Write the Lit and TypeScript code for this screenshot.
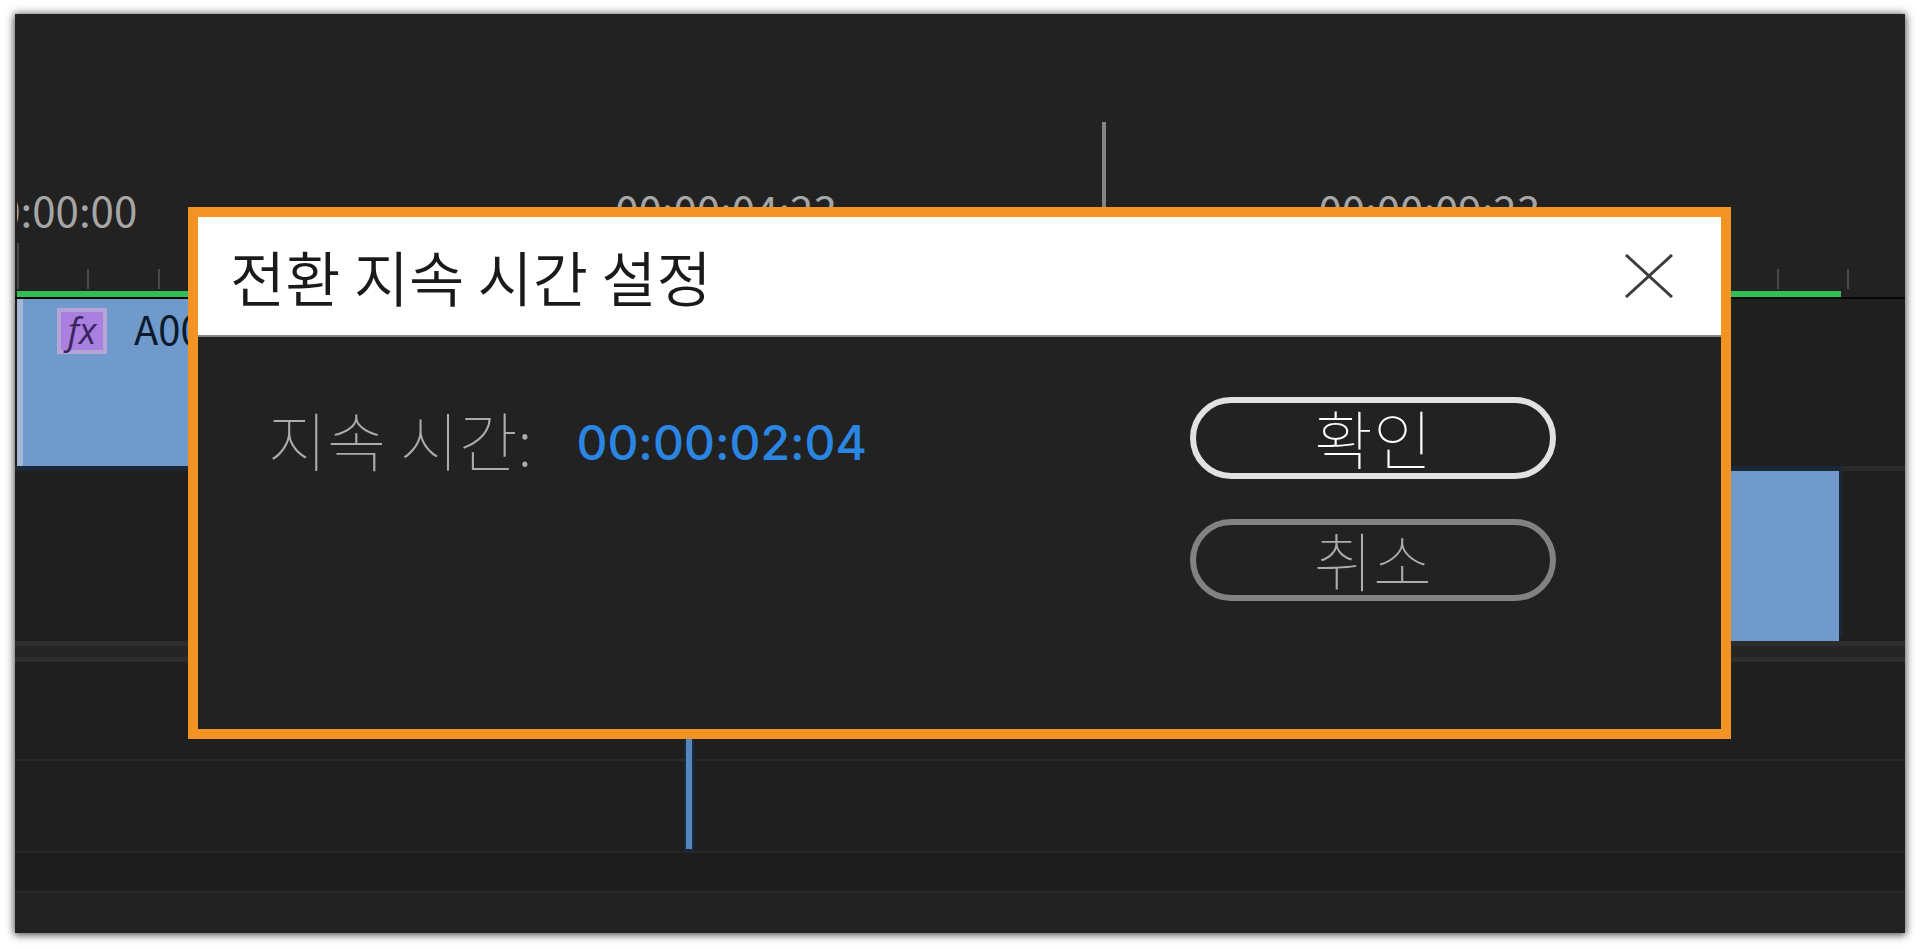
import { LitElement, html, css } from "lit";
import { customElement, state } from "lit/decorators.js";

interface RulerMark {
  at: number;
  major?: boolean;
}

const STEP = 3.728;
const MARKS: RulerMark[] = Array.from({ length: 27 }, (_, i) => ({
  at: i * STEP,
  major: i % 10 === 0,
}));

const LABELS = [
  { at: 0.5, text: "00:00:00:00" },
  { at: 37.55, text: "00:00:04:23" },
  { at: 74.8, text: "00:00:09:23" },
];

@customElement("transition-dialog")
export class TransitionDialog extends LitElement {
  @state() private duration = "00:00:02:04";

  static styles = css`
    :host {
      display: block;
      border: 10px solid #f39324;
      background: #222;
      font-family: "Noto Sans CJK KR", sans-serif;
    }
    .title-bar {
      display: flex;
      align-items: center;
      justify-content: space-between;
      height: 118px;
      padding: 0 48px 0 32px;
      background: #fff;
      border-bottom: 2px solid #858585;
    }
    .title {
      margin: 0;
      font-size: 60px;
      line-height: 80px;
      font-weight: 350;
      color: #1a1a1a;
    }
    button {
      font-family: inherit;
      padding: 0;
      background: none;
      cursor: pointer;
    }
    .close {
      display: block;
      border: 0;
    }
    .close svg {
      display: block;
      width: 48px;
      height: 44px;
    }
    .body {
      display: flex;
      justify-content: space-between;
      align-items: flex-start;
      padding: 60px 165px 128px 70px;
    }
    .field {
      display: flex;
      align-items: center;
      height: 82px;
      gap: 44px;
    }
    .field label {
      font-size: 64px;
      line-height: 82px;
      font-weight: 100;
      color: #acacac;
      white-space: nowrap;
    }
    .field input {
      width: 320px;
      padding: 10px 0 0;
      border: 0;
      outline: 0;
      background: none;
      font-family: Inter, sans-serif;
      font-size: 48px;
      font-weight: 500;
      font-feature-settings: "calt" 0;
      line-height: 64px;
      color: #2a86e2;
    }
    .actions {
      display: flex;
      flex-direction: column;
      gap: 40px;
      width: 366px;
    }
    .actions button {
      height: 82px;
      border: 6px solid #828282;
      border-radius: 41px;
      padding-bottom: 4px;
      color: #acacac;
      font-size: 64px;
      line-height: 66px;
      font-weight: 100;
    }
    .actions .primary {
      border-color: #e2e2e2;
      color: #fff;
    }
  `;

  render() {
    return html`
      <header class="title-bar">
        <h1 class="title">전환 지속 시간 설정</h1>
        <button class="close" type="button" aria-label="닫기">
          <svg viewBox="0 0 48 44" fill="none" stroke="#3c3c3c" stroke-width="3">
            <path d="M1 1 47 43M47 1 1 43" />
          </svg>
        </button>
      </header>
      <div class="body">
        <div class="field">
          <label for="duration">지속 시간:</label>
          <input
            id="duration"
            type="text"
            .value=${this.duration}
            @change=${(e: Event) => (this.duration = (e.target as HTMLInputElement).value)}
          />
        </div>
        <div class="actions">
          <button class="primary" type="button">확인</button>
          <button type="button">취소</button>
        </div>
      </div>
    `;
  }
}

@customElement("app-root")
export class AppRoot extends LitElement {
  static styles = css`
    :host {
      display: block;
      box-sizing: border-box;
      min-height: 100vh;
      padding: 14px 15px 16px;
      background: #fff;
      font-family: "Noto Sans CJK KR", sans-serif;
    }
    .panel {
      position: relative;
      display: flex;
      flex-direction: column;
      min-height: calc(100vh - 30px);
      background: #222;
      box-shadow: 0 1px 8px 1px rgba(0, 0, 0, 0.7);
    }
    .ruler {
      position: relative;
      flex: 1;
      min-height: 277px;
      margin-left: 2px;
      overflow: hidden;
    }
    .mark {
      position: absolute;
      bottom: 2px;
      width: 2px;
      height: 20px;
      background: #4a4a4a;
    }
    .mark.major {
      height: 46px;
    }
    .stamp {
      position: absolute;
      bottom: 52px;
      transform: translateX(-50%);
      font-size: 42px;
      line-height: 60px;
      font-weight: 400;
      color: #a6a6a6;
    }
    .render-bar {
      border-bottom: 2px solid #050505;
      padding-left: 2px;
    }
    .rendered {
      width: 96.6%;
      height: 6px;
      background: #34bd57;
    }
    .track {
      box-sizing: border-box;
      display: flex;
      background: #1f1f1f;
      border-bottom: 2px solid #2a2a2a;
      padding-left: 2px;
    }
    .video-1 {
      height: 172px;
      border-bottom-width: 5px;
    }
    .video-2 {
      height: 175px;
      border-bottom-width: 5px;
      border-bottom-color: #2d2d2d;
    }
    .divider {
      height: 11px;
      background: #252525;
      border-bottom: 5px solid #2d2d2d;
    }
    .audio-1 {
      height: 99px;
    }
    .audio-2 {
      height: 92px;
      border-bottom-color: #272727;
    }
    .scroll {
      height: 40px;
      background: #1d1d1d;
      border-bottom-color: #272727;
    }
    .footer {
      height: 40px;
    }
    .clip {
      box-sizing: border-box;
      display: flex;
      align-items: flex-start;
      background: #6f9acb;
      box-shadow: 0 5px 0 #1c2838;
    }
    .clip-a {
      width: 37%;
      gap: 27px;
      padding: 9px 0 0 34px;
      border-left: 6px solid #a3b8d4;
    }
    .clip-b {
      width: 58%;
      margin-left: 38.5%;
      box-shadow: 3px -5px 0 #1c2838;
    }
    .fx {
      box-sizing: border-box;
      width: 50px;
      height: 46px;
      border: 4px solid #b5a4d6;
      background: #a97fdf;
      color: #3b2560;
      font-family: "Open Sans", sans-serif;
      font-style: italic;
      font-size: 36px;
      line-height: 38px;
      text-align: center;
    }
    .name {
      font-size: 40px;
      line-height: 40px;
      font-weight: 400;
      color: #0c1a2c;
    }
    .playhead {
      position: absolute;
      top: 108px;
      left: 57.5%;
      width: 4px;
      height: 100px;
      background: #848484;
    }
    .edit-line {
      position: absolute;
      bottom: 84px;
      left: 35.5%;
      width: 6px;
      height: 140px;
      background: #5587bd;
      box-shadow: 0 0 0 2px #172c44;
    }
    .dialog {
      position: absolute;
      top: 193px;
      left: 173px;
      right: 174px;
    }
  `;

  render() {
    return html`
      <main class="panel">
        <div class="ruler">
          ${LABELS.map((l) => html`<span class="stamp" style="left:${l.at}%">${l.text}</span>`)}
          ${MARKS.map(
            (m) => html`<i class="mark ${m.major ? "major" : ""}" style="left:${m.at}%"></i>`
          )}
        </div>
        <div class="render-bar"><div class="rendered"></div></div>
        <div class="track video-1">
          <div class="clip clip-a">
            <span class="fx">fx</span>
            <span class="name">A00</span>
          </div>
        </div>
        <div class="track video-2"><div class="clip clip-b"></div></div>
        <div class="divider"></div>
        <div class="track audio-1"></div>
        <div class="track audio-2"></div>
        <div class="track scroll"></div>
        <div class="footer"></div>
        <div class="playhead"></div>
        <div class="edit-line"></div>
        <transition-dialog class="dialog" role="dialog" aria-label="전환 지속 시간 설정"></transition-dialog>
      </main>
    `;
  }
}
